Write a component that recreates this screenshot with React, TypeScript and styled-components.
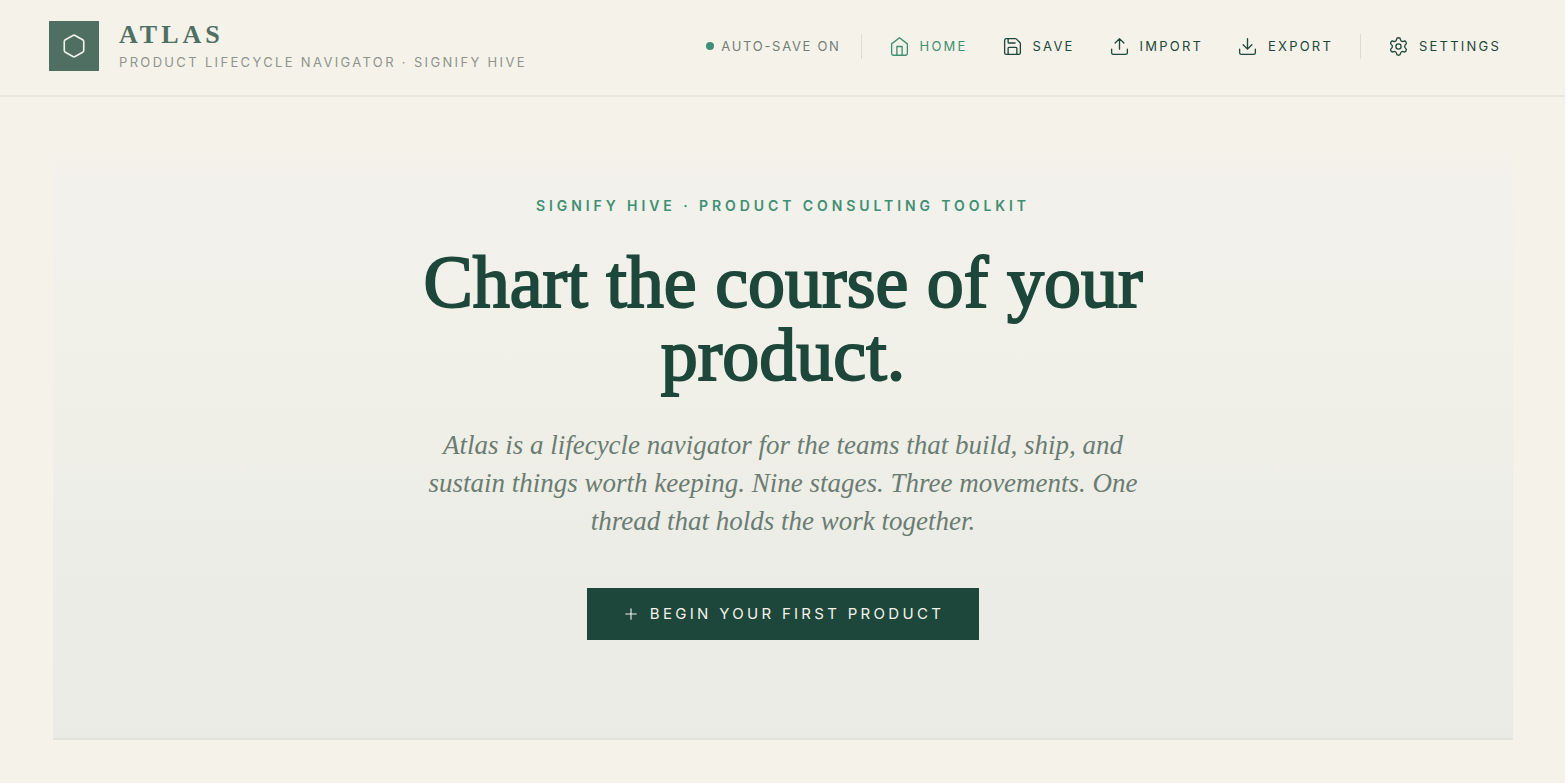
import React from "react";
import styled, { createGlobalStyle } from "styled-components";
import { Settings } from "lucide-react";

const serif = `"Liberation Serif", "Times New Roman", serif`;
const sans = `Inter, "Liberation Sans", sans-serif`;

const GlobalStyle = createGlobalStyle`
  *, *::before, *::after { box-sizing: border-box; }
  html { background: #ffffff; }
  body { margin: 0; font-family: ${sans}; color: #1c473a; }
`;

const Page = styled.div`
  min-height: calc(100vh - 1px);
  margin-right: 3px;
  background: #f5f2ea;
`;

const Header = styled.header`
  display: flex;
  align-items: center;
  justify-content: space-between;
  padding: 21px 49px 24px;
  border-bottom: 2px solid #e9e7e0;
`;

const Brand = styled.a`
  display: flex;
  align-items: center;
  gap: 20px;
  color: inherit;
  text-decoration: none;
`;

const Mark = styled.span`
  display: grid;
  place-items: center;
  width: 50px;
  height: 50px;
  background: #4e6f62;
  color: #f0f3ec;
`;

const BrandText = styled.span`
  display: flex;
  flex-direction: column;
  gap: 6px;
`;

const BrandName = styled.span`
  font: 700 26px/26px ${serif};
  letter-spacing: 4px;
  color: #4e6f62;
`;

const Tagline = styled.span`
  font-size: 13px;
  line-height: 16px;
  letter-spacing: 0.18em;
  color: #8f958c;
`;

const Nav = styled.nav`
  display: flex;
  align-items: center;
  gap: 4px;
`;

const Status = styled.span`
  display: flex;
  align-items: center;
  gap: 7px;
  margin-right: 8px;
  font-size: 13px;
  line-height: 20px;
  letter-spacing: 0.13em;
  color: #737f76;
`;

const Dot = styled.span`
  width: 8px;
  height: 8px;
  border-radius: 50%;
  background: #3f8f76;
`;

const Divider = styled.span`
  width: 1px;
  height: 25px;
  margin: 0 8px;
  background: #dddcd4;
`;

const NavButton = styled.button<{ $active?: boolean }>`
  display: flex;
  align-items: center;
  gap: 10px;
  padding: 8px 15px;
  border: 0;
  background: none;
  font: 400 13px/20px ${sans};
  letter-spacing: 0.17em;
  color: ${(p) => (p.$active ? "#3f8f72" : "#1f473a")};
  cursor: pointer;
`;

const Main = styled.main`
  padding: 56px 52px 42px 53px;
`;

const Hero = styled.section`
  display: flex;
  flex-direction: column;
  align-items: center;
  padding: 43px 24px 98px;
  border-bottom: 2px solid #e1e4dd;
  background: linear-gradient(#f4f2ea, #f2f1eb 6%, #f0f0e8 40%, #ecede6 65%, #e9ebe4);
  text-align: center;
`;

const Eyebrow = styled.p`
  margin: 0 0 30px;
  font-size: 14px;
  font-weight: 600;
  line-height: 20px;
  letter-spacing: 0.28em;
  color: #3f8f72;
`;

const Title = styled.h1`
  max-width: 760px;
  margin: 0 0 34px;
  font: 400 74px/73px ${serif};
  -webkit-text-stroke: 2px currentColor;
  color: #1c473a;
`;

const Lead = styled.p`
  max-width: 724px;
  margin: 0 0 48px;
  font: italic 400 27px/38px ${serif};
  color: #6b7c73;
`;

const Cta = styled.button`
  display: flex;
  align-items: center;
  gap: 10px;
  padding: 16px 35px;
  border: 0;
  background: #1c473a;
  font: 400 15px/20px ${sans};
  letter-spacing: 0.22em;
  color: #f5f2ea;
  cursor: pointer;
`;

const Svg = styled.svg`
  display: block;
  fill: none;
  stroke: currentColor;
  stroke-linecap: round;
  stroke-linejoin: round;
`;

type IconProps = { size: number; stroke?: number; children: React.ReactNode };

const Icon = ({ size, stroke = 1.5, children }: IconProps) => (
  <Svg width={size} height={size} viewBox="0 0 24 24" strokeWidth={stroke} aria-hidden="true">
    {children}
  </Svg>
);

const actions = [
  { label: "HOME", active: true, icon: <><path d="M3 9l9-7 9 7v11a2 2 0 0 1-2 2H5a2 2 0 0 1-2-2z" /><path d="M9 22V12h6v10" /></> },
  { label: "SAVE", icon: <><path d="M15.2 3a2 2 0 0 1 1.4.6l3.8 3.8a2 2 0 0 1 .6 1.4V19a2 2 0 0 1-2 2H5a2 2 0 0 1-2-2V5a2 2 0 0 1 2-2z" /><path d="M17 21v-7a1 1 0 0 0-1-1H8a1 1 0 0 0-1 1v7M7 3v4a1 1 0 0 0 1 1h7" /></> },
  { label: "IMPORT", icon: <path d="M21 15v4a2 2 0 0 1-2 2H5a2 2 0 0 1-2-2v-4M17 8l-5-5-5 5M12 3v12" /> },
  { label: "EXPORT", icon: <path d="M21 15v4a2 2 0 0 1-2 2H5a2 2 0 0 1-2-2v-4M7 10l5 5 5-5M12 15V3" /> },
];

export default function App() {
  return (
    <>
      <GlobalStyle />
      <Page>
        <Header>
          <Brand href="#">
            <Mark>
              <Icon size={26}>
                <path d="M21 16V8a2 2 0 0 0-1-1.73l-7-4a2 2 0 0 0-2 0l-7 4A2 2 0 0 0 3 8v8a2 2 0 0 0 1 1.73l7 4a2 2 0 0 0 2 0l7-4A2 2 0 0 0 21 16z" />
              </Icon>
            </Mark>
            <BrandText>
              <BrandName>ATLAS</BrandName>
              <Tagline>PRODUCT LIFECYCLE NAVIGATOR · SIGNIFY HIVE</Tagline>
            </BrandText>
          </Brand>
          <Nav>
            <Status><Dot />AUTO-SAVE ON</Status>
            <Divider />
            {actions.map((a) => (
              <NavButton key={a.label} type="button" $active={a.active}>
                <Icon size={21}>{a.icon}</Icon>
                {a.label}
              </NavButton>
            ))}
            <Divider />
            <NavButton type="button">
              <Settings size={21} strokeWidth={1.5} aria-hidden="true" />
              SETTINGS
            </NavButton>
          </Nav>
        </Header>
        <Main>
          <Hero>
            <Eyebrow>SIGNIFY HIVE · PRODUCT CONSULTING TOOLKIT</Eyebrow>
            <Title>Chart the course of your product.</Title>
            <Lead>
              Atlas is a lifecycle navigator for the teams that build, ship, and sustain things worth
              keeping. Nine stages. Three movements. One thread that holds the work together.
            </Lead>
            <Cta type="button">
              <Icon size={18}><path d="M5 12h14M12 5v14" /></Icon>
              BEGIN YOUR FIRST PRODUCT
            </Cta>
          </Hero>
        </Main>
      </Page>
    </>
  );
}
